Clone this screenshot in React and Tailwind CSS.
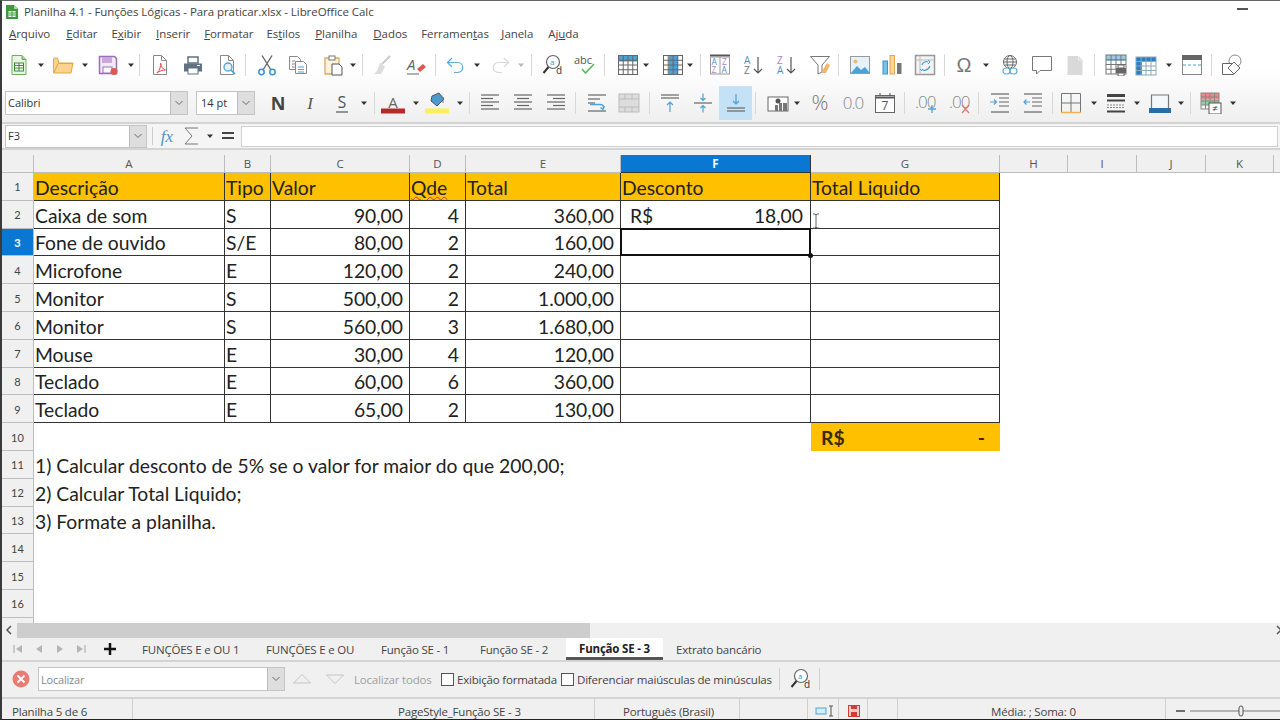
import React from "react";

const Ico = ({ c = "", children, w = 22 }) => (
  <svg viewBox={`0 0 ${w} 22`} width={w} height={22} fill="none" className={"shrink-0 " + c}>{children}</svg>
);
const Arrow = ({ c = "", light }) => (
  <svg viewBox="0 0 8 22" width={8} height={22} className={"shrink-0 " + c}>
    <path d="M1 9.5h6L4 13z" fill={light ? "#b8b8b8" : "#333"} />
  </svg>
);
const Sep = ({ c = "" }) => <div className={"w-px h-[22px] shrink-0 bg-[#d8d8d8] " + c} />;
const Grid = ({ x = 2, y = 3, w = 18, h = 16, s = "#777", cols = 4, rows = 4 }) => {
  const out = [];
  for (let i = 1; i < cols; i++) out.push(<path key={"c" + i} d={`M${x + (w * i) / cols} ${y}v${h}`} stroke={s} />);
  for (let i = 1; i < rows; i++) out.push(<path key={"r" + i} d={`M${x} ${y + (h * i) / rows}h${w}`} stroke={s} />);
  return <g>{out}<rect x={x} y={y} width={w} height={h} stroke={s} /></g>;
};

const T = { fontFamily: "'Open Sans',sans-serif" };

const New = (p) => <Ico {...p}><path d="M4 1.5h10l4 4v15H4z" fill="#eaf5e6" stroke="#6fae5c" /><path d="M14 1.5v4h4" stroke="#6fae5c" fill="#9fd08f" /><rect x="6.5" y="9" width="9" height="8" fill="#fff" stroke="#3f8a3a" /><path d="M6.5 11.5h9M6.5 14h9M11 9v8" stroke="#3f8a3a" /></Ico>;
const Open = (p) => <Ico {...p}><path d="M1.5 6V19h17.5l2-10H7L5.5 4H2z" fill="#fbd38d" stroke="#e5a64a" /><path d="M2 18.5 6 9.5h15" stroke="#e5a64a" fill="none" /></Ico>;
const Save = (p) => <Ico {...p}><path d="M2.5 2.5h15l2 2v15h-17z" fill="#f3e9f7" stroke="#9b6fb5" strokeWidth="1.5" /><rect x="5" y="3" width="10" height="6" fill="#c9a8dc" /><rect x="6" y="13" width="9" height="6" fill="#fff" stroke="#9b6fb5" /><circle cx="17" cy="17.5" r="3.5" fill="#e2574c" /></Ico>;
const Pdf = (p) => <Ico {...p}><path d="M4.5 1.5h8l5 5v14h-13z" fill="#fff" stroke="#888" /><path d="M12.5 1.5v5h5" stroke="#888" /><path d="M8 19c3-3 4-7 3.5-10 1 4 2 6 5 7-3 0-6 1-8.5 3z" stroke="#d9534f" fill="none" /></Ico>;
const Print = (p) => <Ico {...p}><rect x="6" y="3" width="10" height="6" fill="#fff" stroke="#5f7182" strokeWidth="1.5" /><path d="M2 9.5h18v8H2z" fill="#5f7182" /><rect x="6" y="14" width="10" height="6" fill="#fff" stroke="#5f7182" /><path d="M15 11.5h3" stroke="#fff" /></Ico>;
const Preview = (p) => <Ico {...p}><path d="M4.5 1.5h8l5 5v14h-13z" fill="#fff" stroke="#8a8a8a" /><path d="M12.5 1.5v5h5" stroke="#8a8a8a" /><circle cx="12" cy="13" r="4" stroke="#4aa3d8" fill="#e3f2fb" strokeWidth="1.3" /><path d="m15 16 4 4" stroke="#4aa3d8" strokeWidth="1.7" /></Ico>;
const Cut = (p) => <Ico {...p}><path d="M6 1.5 15 16M16 1.5 7 16" stroke="#666" strokeWidth="1.4" /><circle cx="5.5" cy="18" r="2.7" stroke="#3d93cf" strokeWidth="1.5" /><circle cx="16.5" cy="18" r="2.7" stroke="#3d93cf" strokeWidth="1.5" /></Ico>;
const Copy = (p) => <Ico {...p}><path d="M2.5 2.5h8l3 3v10h-11z" fill="#fff" stroke="#8a8a8a" /><path d="M8.5 7.5h8l3 3v9h-11z" fill="#fff" stroke="#8a8a8a" /><path d="M5 7h3M5 10h3M5 13h3" stroke="#8a8a8a" /><path d="M11 13h6M11 15.5h6M11 18h6" stroke="#4aa3d8" /></Ico>;
const Paste = (p) => <Ico {...p}><path d="M3 4h14v16H3z" fill="#fdf3dc" stroke="#d9ad62" strokeWidth="1.3" /><rect x="7" y="2" width="6" height="4" fill="#fff" stroke="#777" /><path d="M10 10h7l3 3v8H10z" fill="#fff" stroke="#555" /></Ico>;
const Clone = (p) => <Ico {...p}><path d="M19 2 11 10" stroke="#c9c9c9" strokeWidth="2" /><path d="M9 8.5 14 13l-4 7H3c3-2 4-5 6-11.5z" fill="#dcdcdc" /></Ico>;
const Clear = (p) => <Ico {...p}><text x="2" y="16" fontSize="15" fontStyle="italic" fill="#666" style={T}>A</text><path d="M2 20h12" stroke="#666" /><path d="m12 15 6-5 3 3-6 5z" fill="#e2574c" /></Ico>;
const Undo = (p) => <Ico {...p}><path d="M7 4 2.5 8.5 7 13M3 8.5h9.5c7 0 7 10 0 10H9" stroke="#5fa8d8" strokeWidth="1.2" /></Ico>;
const Redo = (p) => <Ico {...p}><path d="M15 4l4.5 4.5L15 13M19 8.500H9.5c-7 0-7 10 0 10H13" stroke="#d8d8d8" strokeWidth="1.2" /></Ico>;
const Find = (p) => <Ico {...p}><circle cx="11" cy="8" r="6.5" stroke="#666" fill="#fff" strokeWidth="1.2" /><path d="M6.5 13 1.5 19" stroke="#333" strokeWidth="2" /><text x="8" y="10.5" fontSize="8" fill="#3d93cf" style={T}>a</text><text x="14" y="20" fontSize="10" fill="#333" style={T}>d</text></Ico>;
const Spell = (p) => <Ico {...p}><text x="0" y="10" fontSize="11" fill="#555" style={T}>abc</text><path d="m8 15 3.5 4L20 10" stroke="#5fb760" strokeWidth="1.7" /></Ico>;
const TableI = (p) => <Ico {...p}><rect x="1.5" y="1.5" width="19" height="6" fill="#4aa3d8" /><Grid x={1.5} y={1.5} w={19} h={19} s="#666" /></Ico>;
const ColI = (p) => <Ico {...p}><rect x="7" y="1.5" width="9" height="19" fill="#4aa3d8" /><Grid x={1.5} y={1.5} w={19} h={19} s="#666" /></Ico>;
const AutoF = (p) => <Ico {...p}><path d="M1 1.5h20" stroke="#555" strokeWidth="2" /><rect x="1.5" y="3" width="19" height="17" fill="#fff" stroke="#999" /><path d="M11 3v17" stroke="#999" /><text x="2.5" y="11" fontSize="8.500" fill="#3d93cf" style={T}>A</text><text x="2.5" y="19" fontSize="8.500" fill="#b57ecb" style={T}>Z</text><text x="13" y="11" fontSize="8.500" fill="#b57ecb" style={T}>Z</text><text x="12.5" y="19" fontSize="8.500" fill="#3d93cf" style={T}>A</text></Ico>;
const Sort = ({ az, ...p }) => <Ico {...p}><text x="1" y="9.500" fontSize="10" fill={az ? "#3d93cf" : "#b57ecb"} style={T}>{az ? "A" : "Z"}</text><text x="1" y="20" fontSize="10" fill={az ? "#777" : "#3d93cf"} style={T}>{az ? "Z" : "A"}</text><path d="M15 3v16M11 15l4 4 4-4" stroke="#555" strokeWidth="1.2" /></Ico>;
const Filter = (p) => <Ico {...p}><path d="M1.5 2.5h19L13 11v7l-4 2V11z" fill="#fff" stroke="#777" /><path d="m12 19 6-10 3 2-4 8z" fill="#f2b56b" /></Ico>;
const Image = (p) => <Ico {...p}><rect x="1.5" y="2.5" width="19" height="17" fill="#e5f2fa" stroke="#999" /><circle cx="6.5" cy="7.5" r="2" fill="#f0b860" /><path d="M2 19 8 12l4 4 4-3 4 5v1H2z" fill="#4aa3d8" /></Ico>;
const Chart = (p) => <Ico {...p}><rect x="2" y="7" width="4.5" height="13" fill="#7cc0e6" stroke="#3d93cf" /><rect x="9" y="1.5" width="4.5" height="18.5" fill="#f8d79a" stroke="#e5a64a" /><rect x="16" y="9" width="4.5" height="11" fill="#777" /></Ico>;
const Pivot = (p) => <Ico {...p}><rect x="1.5" y="1.5" width="19" height="19" fill="#f4f4f4" stroke="#999" strokeWidth="1.5" /><path d="M1.5 6h19M6 1.5v19" stroke="#bbb" /><path d="M8 15c1 2 6 2 8-3M14 8c-2-1-5 0-6 3" stroke="#4aa3d8" strokeWidth="1.3" /><path d="m14 6 2 2-2 2M8 17l-2-2" stroke="#4aa3d8" /></Ico>;
const Omega = (p) => <Ico {...p}><text x="11" y="18" textAnchor="middle" fontSize="20" fill="#777" style={{ fontFamily: "'Liberation Sans',sans-serif" }}>Ω</text></Ico>;
const Link = (p) => <Ico {...p}><circle cx="11" cy="8" r="6.5" stroke="#666" fill="#fff" /><ellipse cx="11" cy="8" rx="3" ry="6.5" stroke="#666" /><path d="M4.5 8h13M5.5 5h11M5.5 11h11" stroke="#666" /><rect x="4" y="14" width="7" height="6" rx="3" fill="#fff" stroke="#5fa8d8" strokeWidth="1.2" /><rect x="11" y="14" width="7" height="6" rx="3" fill="#fff" stroke="#5fa8d8" strokeWidth="1.2" /></Ico>;
const Comment = (p) => <Ico {...p}><path d="M1.5 2.5h19v14H9L5.5 20v-3.5h-4z" fill="#fff" stroke="#777" /></Ico>;
const Note = (p) => <Ico {...p}><path d="M3.5 2h11l4 4v15h-15z" fill="#d9d9d9" /><path d="M14.5 2v4h4" stroke="#f0f0f0" /></Ico>;
const Headers = (p) => <Ico {...p}><rect x="1" y="1" width="20" height="6" fill="#9cc8e2" /><Grid x={1} y={1} w={20} h={19} s="#777" /><rect x="11" y="14" width="10" height="5" fill="#666" /><rect x="13" y="11" width="6" height="3" fill="#fff" stroke="#666" /><rect x="13" y="19" width="6" height="3" fill="#fff" stroke="#666" /></Ico>;
const Names = (p) => <Ico {...p}><rect x="1" y="4" width="20" height="17" fill="#fff" /><rect x="1" y="3" width="20" height="5" fill="#2b7cc0" /><rect x="1" y="3" width="6" height="18" fill="#2b7cc0" /><Grid x={1} y={3} w={20} h={18} s="#8ab" /></Ico>;
const Freeze = (p) => <Ico {...p}><rect x="1.5" y="1.5" width="19" height="19" fill="#fff" stroke="#888" /><rect x="1" y="1" width="20" height="5" fill="#666" /><path d="M2 11h18" stroke="#4aa3d8" strokeDasharray="3 2" /></Ico>;
const Shapes = (p) => <Ico {...p}><circle cx="14" cy="7" r="6" fill="#fff" stroke="#888" /><path d="M1.5 9.5h11v11h-11z" fill="#fff" stroke="#666" /><path d="m13 8 6 6-6 6-6-6z" fill="#fff" stroke="#666" /></Ico>;

const Bar = ({ l = 2, r = 20, y, c = "#666" }) => <path d={`M${l} ${y}H${r}`} stroke={c} strokeWidth="1.2" />;
const AlignL = (p) => <Ico {...p}>{[3, 6.5, 10, 13.5, 17].map((y, i) => <Bar key={y} y={y} r={i % 2 ? 14 : 20} />)}</Ico>;
const AlignC = (p) => <Ico {...p}>{[3, 6.5, 10, 13.5, 17].map((y, i) => <Bar key={y} y={y} l={i % 2 ? 5 : 2} r={i % 2 ? 17 : 20} />)}</Ico>;
const AlignR = (p) => <Ico {...p}>{[3, 6.5, 10, 13.5, 17].map((y, i) => <Bar key={y} y={y} l={i % 2 ? 8 : 2} />)}</Ico>;
const Wrap = (p) => <Ico {...p}><Bar y={3} /><Bar y={7} r={14} /><Bar y={11} r={9} /><Bar y={19} /><path d="M4 12.5h10c4 0 4 3 3 4m-2.5-1 2.5 2 1.5-3.5" stroke="#4aa3d8" strokeWidth="1.3" /></Ico>;
const Merge = (p) => <Ico {...p}><rect x="1" y="2" width="20" height="18" fill="#ddd" stroke="#bbb" /><path d="M1 7h20M1 15h20M7 2v5M14 2v5M7 15v5M14 15v5" stroke="#bbb" /></Ico>;
const VTop = (p) => <Ico {...p}><Bar y={3} /><Bar y={6} /><path d="M11 20V10M8 13l3-3 3 3" stroke="#4aa3d8" strokeWidth="1.2" /></Ico>;
const VMid = (p) => <Ico {...p}><Bar y={11} /><path d="M11 1.5v7M8.5 6l2.5 2.5L13.5 6M11 20.5v-7M8.5 16l2.5-2.5 2.5 2.5" stroke="#4aa3d8" strokeWidth="1.2" /></Ico>;
const VBot = (p) => <Ico {...p}><path d="M11 2v10M8 9l3 3 3-3" stroke="#4aa3d8" strokeWidth="1.2" /><Bar y={16} /><Bar y={19} /></Ico>;
const Currency = (p) => <Ico {...p}><rect x="1" y="5" width="20" height="14" fill="#fff" stroke="#666" /><circle cx="11" cy="9" r="2.5" fill="#555" /><rect x="8" y="13" width="3" height="6" fill="#777" /><rect x="12" y="11" width="3" height="8" fill="#777" /><rect x="16" y="11" width="4" height="8" fill="#777" /></Ico>;
const Pct = (p) => <Ico {...p}><text x="11" y="18" textAnchor="middle" fontSize="21" fill="#777" style={{ ...T, fontWeight: 300 }}>%</text></Ico>;
const Dec = (p) => <Ico {...p}><text x="11" y="17" textAnchor="middle" fontSize="17" letterSpacing="-1" fill="#888" style={{ ...T, fontWeight: 300 }}>0.0</text></Ico>;
const Cal = (p) => <Ico {...p}><rect x="1.5" y="3.5" width="19" height="17" fill="#fff" stroke="#666" /><path d="M1.5 5.5h19" stroke="#555" strokeWidth="2" /><path d="M6 1v3M16 1v3" stroke="#555" /><text x="11" y="18" textAnchor="middle" fontSize="12" fill="#555" style={T}>7</text></Ico>;
const AddDec = (p) => <Ico {...p}><text x="0" y="16" fontSize="17" letterSpacing="-1" fill="#888" style={{ ...T, fontWeight: 300 }}>.00</text><path d="M17 13v8M13 17h8" stroke="#4aa3d8" strokeWidth="1.3" /></Ico>;
const DelDec = (p) => <Ico {...p}><text x="0" y="16" fontSize="17" letterSpacing="-1" fill="#888" style={{ ...T, fontWeight: 300 }}>.00</text><path d="m13 13 7 8M20 13l-7 8" stroke="#e2776c" strokeWidth="1.3" /></Ico>;
const Indent = (p) => <Ico {...p}><Bar y={2} /><Bar y={20} /><path d="M10 6h10M10 10h10M10 14h10" stroke="#666" /><path d="M1 10h6M5 7.5 7.5 10 5 12.5" stroke="#4aa3d8" strokeWidth="1.2" /></Ico>;
const Outdent = (p) => <Ico {...p}><Bar y={2} /><Bar y={20} /><path d="M10 6h10M10 10h10M10 14h10" stroke="#666" /><path d="M8 10H2M4.5 7.5 2 10l2.5 2.5" stroke="#4aa3d8" strokeWidth="1.2" /></Ico>;
const Borders = (p) => <Ico {...p}><path d="M1.5 20.5v-19h19v19M11 1.5v19M1.5 11h19" stroke="#777" /><path d="M1 20.5h20" stroke="#f2b14c" strokeWidth="1.5" /></Ico>;
const Lines = (p) => <Ico {...p}><path d="M2 3.5h18" stroke="#444" strokeWidth="3" /><path d="M2 8.5h18" stroke="#444" strokeWidth="2" /><path d="M2 13h18M2 15.5h18" stroke="#888" strokeDasharray="2 1" /><path d="M2 19.5h18" stroke="#444" strokeWidth="2" /></Ico>;
const BColor = (p) => <Ico {...p} w={24}><path d="M3.5 16V3h17v13" fill="#f4f8fb" stroke="#777" strokeWidth="1.2" /><path d="M1 16h22v5H1z" fill="#2a6ca6" /></Ico>;
const Cond = (p) => <Ico {...p}><rect x="1" y="1" width="18" height="6" fill="#e88" /><rect x="1" y="7" width="18" height="6" fill="#9c9" /><Grid x={1} y={1} w={18} h={16} s="#888" /><rect x="9" y="11" width="12" height="11" fill="#fff" stroke="#555" /><text x="15" y="20" textAnchor="middle" fontSize="10" fill="#333" style={T}>≠</text></Ico>;

const Chevron = ({ c = "" }) => (
  <div className={"flex items-center justify-center bg-[#dedede] border-l border-[#bdbdbd] shrink-0 " + c}>
    <svg width="10" height="8" viewBox="0 0 10 8"><path d="m1.5 2 3.5 3.5L8.5 2" stroke="#666" fill="none" /></svg>
  </div>
);

const COLS = [
  ["A", false], ["B", false], ["C", false], ["D", false], ["E", false], ["F", true], ["G", false],
  ["H", false], ["I", false], ["J", false], ["K", false],
];

const ROWS = [
  ["Caixa de som", "S", "90,00", "4", "360,00"],
  ["Fone de ouvido", "S/E", "80,00", "2", "160,00"],
  ["Microfone", "E", "120,00", "2", "240,00"],
  ["Monitor", "S", "500,00", "2", "1.000,00"],
  ["Monitor", "S", "560,00", "3", "1.680,00"],
  ["Mouse", "E", "30,00", "4", "120,00"],
  ["Teclado", "E", "60,00", "6", "360,00"],
  ["Teclado", "E", "65,00", "2", "130,00"],
];

const Cell = ({ c = "", children }) => (
  <div className={"border-r border-b border-[#333] px-[1px] pt-[2px] flex items-center whitespace-nowrap text-[#222] " + c}>{children}</div>
);
const RowH = ({ n, active }) => (
  <div className={"flex items-center justify-center border-r border-b border-[#bdbdbd] text-[11px] pt-[1px] " + (active ? "bg-[#0a78d2] text-white font-bold" : "bg-[#f0f0f0] text-[#444]")}>{n}</div>
);
const Free = ({ c = "", children }) => <div className={"flex items-center pt-[2px] whitespace-nowrap overflow-visible text-[#222] px-[1px] " + c}>{children}</div>;
const Empty = ({ span }) => <div className={span} />;

const NavTri = ({ d, bar }) => (
  <svg width="10" height="12" viewBox="0 0 10 12" className="shrink-0">
    <path d={d} fill="#b5b5b5" />
    {bar && <path d={bar} stroke="#b5b5b5" strokeWidth="1.3" />}
  </svg>
);

const Tab = ({ c = "", children }) => <span className={"whitespace-nowrap shrink-0 " + c}>{children}</span>;

export default function App() {
  const ui = { fontFamily: "'Open Sans','Noto Sans',sans-serif" };
  const sheet = { fontFamily: "Lato,'Open Sans',sans-serif" };
  return (
    <div className="w-[1280px] h-[720px] overflow-hidden bg-white border-l-2 border-t border-b border-l-[#3a3a3a] border-t-[#666] border-b-[#222] flex flex-col text-[#333]" style={ui}>
      {/* title */}
      <div className="h-[21px] shrink-0 flex items-center bg-white">
        <svg width="14" height="16" viewBox="0 0 14 16" className="ml-[3px] shrink-0"><path d="M1 1h8l4 4v10H1z" fill="#3f9a3f" /><path d="M9 1v4h4" fill="#a8d8a0" /><rect x="3.5" y="7" width="7" height="6" fill="#fff" /><path d="M3.5 9h7M3.5 11h7M7 7v6" stroke="#3f9a3f" /></svg>
        <span className="ml-[5px] text-[11.5px] whitespace-nowrap tracking-[-0.06px] text-[#444]">Planilha 4.1 - Funções Lógicas - Para praticar.xlsx - LibreOffice Calc</span>
        <div className="ml-auto mr-[32px] w-[11px] h-[1.5px] bg-[#555] -mt-[5px]" />
      </div>
      {/* menu */}
      <div className="h-[24px] shrink-0 flex items-center text-[11.5px] tracking-[-0.06px] text-[#444] bg-white whitespace-nowrap">
        <span className="ml-[7px]"><u>A</u>rquivo</span>
        <span className="ml-[16px]"><u>E</u>ditar</span>
        <span className="ml-[14px]">E<u>x</u>ibir</span>
        <span className="ml-[15px]"><u>I</u>nserir</span>
        <span className="ml-[14px]"><u>F</u>ormatar</span>
        <span className="ml-[13px]">Es<u>t</u>ilos</span>
        <span className="ml-[15px]"><u>P</u>lanilha</span>
        <span className="ml-[16px]"><u>D</u>ados</span>
        <span className="ml-[14px]">Ferramen<u>t</u>as</span>
        <span className="ml-[12.5px]"><u>J</u>anela</span>
        <span className="ml-[15px]">Aj<u>u</u>da</span>
      </div>
      {/* toolbars */}
      <div className="shrink-0 bg-gradient-to-b from-white from-30% to-[#efefef]">
        <div className="h-[38px] flex items-center">
          <New c="ml-[6px]" /><Arrow c="ml-[7px]" /><Open c="ml-[7px]" /><Arrow c="ml-[7px]" /><Save c="ml-[8px]" /><Arrow c="ml-[8px]" /><Sep c="ml-[4px]" />
          <Pdf c="ml-[9px]" /><Print c="ml-[11px]" /><Preview c="ml-[12px]" /><Sep c="ml-[7px]" />
          <Cut c="ml-[10px]" /><Copy c="ml-[9px]" /><Paste c="ml-[13px]" /><Arrow c="ml-[5px]" /><Sep c="ml-[5px]" />
          <Clone c="ml-[8px]" /><Clear c="ml-[12px]" /><Sep c="ml-[8px]" />
          <Undo c="ml-[9px]" /><Arrow c="ml-[6px]" /><Redo c="ml-[8px]" /><Arrow light c="ml-[6px]" /><Sep c="ml-[6px]" />
          <Find c="ml-[10px]" /><Spell c="ml-[10px]" /><Sep c="ml-[8px]" />
          <TableI c="ml-[12px]" /><Arrow c="ml-[3px]" /><ColI c="ml-[12px]" /><Arrow c="ml-[2px]" /><Sep c="ml-[6px]" />
          <AutoF c="ml-[8px]" /><Sort az c="ml-[12px]" /><Sort c="ml-[11px]" /><Filter c="ml-[11px]" /><Sep c="ml-[7px]" />
          <Image c="ml-[10px]" /><Chart c="ml-[10px]" /><Pivot c="ml-[11px]" /><Sep c="ml-[8px]" />
          <Omega c="ml-[8px]" /><Arrow c="ml-[7px]" /><Link c="ml-[9px]" /><Comment c="ml-[10px]" /><Note c="ml-[11px]" /><Sep c="ml-[8px]" />
          <Headers c="ml-[10px]" /><Names c="ml-[8px]" /><Arrow c="ml-[8px]" /><Freeze c="ml-[8px]" /><Sep c="ml-[8px]" /><Shapes c="ml-[9px]" />
        </div>
        <div className="h-[38px] flex items-center">
          <div className="ml-[3px] w-[183px] h-[24px] flex border border-[#c4c4c4] bg-white text-[11px] shrink-0">
            <span className="flex-1 pl-[2px] self-center">Calibri</span><Chevron c="w-[17px]" />
          </div>
          <div className="ml-[8px] w-[59px] h-[24px] flex border border-[#c4c4c4] bg-white text-[11px] shrink-0">
            <span className="flex-1 pl-[4px] self-center whitespace-nowrap">14 pt</span><Chevron c="w-[17px]" />
          </div>
          <Ico c="ml-[12px]"><text x="11" y="18" textAnchor="middle" fontSize="18" fontWeight="700" fill="#444" style={T}>N</text></Ico>
          <Ico c="ml-[10px]"><text x="11" y="17" textAnchor="middle" fontSize="17" fontStyle="italic" fill="#555" style={{ fontFamily: "'Liberation Serif',serif" }}>I</text></Ico>
          <Ico c="ml-[10px]"><text x="11" y="16" textAnchor="middle" fontSize="16" fill="#555" style={T}>S</text><path d="M5 20h12" stroke="#555" strokeWidth="1.2" /></Ico>
          <Arrow c="ml-[7px]" /><Sep c="ml-[6px]" />
          <Ico w={24} c="ml-[6px]"><text x="12" y="15.5" textAnchor="middle" fontSize="15" fill="#666" style={T}>A</text><rect x="0" y="16.5" width="24" height="5" fill="#b32a2a" /></Ico>
          <Arrow c="ml-[7px]" />
          <Ico w={24} c="ml-[5px]"><path d="m7 4 7-3 5 6-7 7-6-5z" fill="#4a9ad0" stroke="#555" /><path d="M18 5v6" stroke="#777" /><rect x="0" y="16.5" width="24" height="5" fill="#fbef5a" /></Ico>
          <Arrow c="ml-[7px]" /><Sep c="ml-[5px]" />
          <AlignL c="ml-[9px]" /><AlignC c="ml-[11px]" /><AlignR c="ml-[11px]" /><Sep c="ml-[8px]" />
          <Wrap c="ml-[10px]" /><Merge c="ml-[10px]" /><Sep c="ml-[9px]" />
          <VTop c="ml-[9px]" /><VMid c="ml-[11px]" />
          <div className="ml-[5px] w-[33px] h-[34px] bg-[#c5e1f5] flex items-center justify-center shrink-0"><VBot /></div>
          <Sep c="ml-[3px]" />
          <Currency c="ml-[11px]" /><Arrow c="ml-[4px]" /><Pct c="ml-[8px]" /><Dec c="ml-[11px]" /><Cal c="ml-[10px]" /><Sep c="ml-[8px]" />
          <AddDec c="ml-[10px]" /><DelDec c="ml-[12px]" /><Sep c="ml-[7px]" />
          <Indent c="ml-[10px]" /><Outdent c="ml-[11px]" /><Sep c="ml-[8px]" />
          <Borders c="ml-[7px]" /><Arrow c="ml-[8px]" /><Lines c="ml-[7px]" /><Arrow c="ml-[6px]" /><BColor c="ml-[7px]" /><Arrow c="ml-[5px]" /><Sep c="ml-[5px]" />
          <Cond c="ml-[9px]" /><Arrow c="ml-[7px]" />
        </div>
      </div>
      {/* formula bar */}
      <div className="h-[28px] shrink-0 flex items-center bg-[#f5f5f5] border-t-2 border-b-2 border-[#d4d4d4]">
        <div className="ml-[3px] w-[142px] h-[23px] flex border border-[#c4c4c4] bg-white text-[11px] shrink-0">
          <span className="flex-1 pl-[2px] pt-[1px] self-center">F3</span><Chevron c="w-[17px]" />
        </div>
        <div className="ml-[5px] w-px h-[18px] bg-[#ccc] shrink-0" />
        <Ico c="ml-[3px]"><text x="11" y="17" textAnchor="middle" fontSize="17" fontStyle="italic" fill="#4a96c8" style={{ fontFamily: "'Liberation Serif',serif" }}>fx</text></Ico>
        <Ico c="ml-[2px]" w={20}><path d="M18 3H5l7 8-7 8h13" stroke="#777" /></Ico>
        <Arrow c="ml-[6px]" />
        <Ico c="ml-[7px]" w={14}><path d="M1 8h12M1 13h12" stroke="#444" strokeWidth="1.8" /></Ico>
        <div className="ml-[6px] flex-1 mr-[2px] h-[21px] bg-white border border-[#d0d0d0]" />
      </div>
      {/* sheet */}
      <div className="h-[5px] shrink-0 bg-[#f0f0f0]" />
      <div className="shrink-0 grid grid-cols-[32px_191px_46px_139px_56px_155px_190px_189px_68px_69px_69px_68px_1fr] grid-rows-[18px_repeat(16,27.8px)] text-[19.3px] leading-none bg-white" style={sheet}>
        <div className="bg-[#f0f0f0] border-r border-b border-[#bdbdbd]" />
        {COLS.map(([l, act]) => (
          <div key={l} className={"flex items-center justify-center border-r border-b text-[11.5px] " + (act ? "bg-[#0a78d2] text-white font-bold border-[#333]" : "bg-[#f0f0f0] text-[#555] border-[#bdbdbd]")} style={ui}>{l}</div>
        ))}
        <div className="bg-[#f0f0f0] border-b border-[#bdbdbd]" />

        <RowH n="1" />
        {["Descrição", "Tipo", "Valor", "Qde", "Total", "Desconto", "Total Liquido"].map((t) => (
          <Cell key={t} c="bg-[#ffc000] text-[#3a2a00]">
            {t === "Qde" ? <span className="underline decoration-wavy decoration-[#d33] decoration-1">{t}</span> : t}
          </Cell>
        ))}
        <Empty span="col-span-5" />

        {ROWS.map((r, i) => (
          <React.Fragment key={i}>
            <RowH n={String(i + 2)} active={i === 1} />
            <Cell>{r[0]}</Cell>
            <Cell>{r[1]}</Cell>
            <Cell c="justify-end pr-[6px]">{r[2]}</Cell>
            <Cell c="justify-end pr-[6px]">{r[3]}</Cell>
            <Cell c="justify-end pr-[6px]">{r[4]}</Cell>
            {i === 0 ? (
              <Cell c="justify-between pl-[9px] pr-[7px]"><span>R$</span><span>18,00</span></Cell>
            ) : i === 1 ? (
              <Cell c="relative">
                <div className="absolute -left-px -top-px -right-px -bottom-px border-2 border-[#111]" />
                <div className="absolute -right-[3px] -bottom-[3px] w-[5px] h-[5px] bg-[#111] rounded-full" />
              </Cell>
            ) : (
              <Cell />
            )}
            {i === 0 ? (
              <Cell c="relative">
                <svg width="8" height="16" viewBox="0 0 8 16" className="absolute left-[1px] top-[12px]"><path d="M1 1h2l1 1 1-1h2M4 2v12M1 15h2l1-1 1 1h2" stroke="#666" fill="none" /></svg>
              </Cell>
            ) : (
              <Cell />
            )}
            <Empty span="col-span-5" />
          </React.Fragment>
        ))}

        <RowH n="10" />
        <Empty span="col-span-6" />
        <div className="bg-[#ffc000] flex items-center justify-between pl-[10px] pr-[15px] pt-[2px] font-bold text-[#3a2a00]"><span>R$</span><span>-</span></div>
        <Empty span="col-span-5" />

        {["1) Calcular desconto de 5% se o valor for maior do que 200,00;", "2) Calcular Total Liquido;", "3) Formate a planilha."].map((t, i) => (
          <React.Fragment key={t}>
            <RowH n={String(i + 11)} />
            <Free c="col-span-12">{t}</Free>
          </React.Fragment>
        ))}
        {["14", "15", "16"].map((n) => (
          <React.Fragment key={n}>
            <RowH n={n} />
            <Empty span="col-span-12" />
          </React.Fragment>
        ))}
      </div>
      <div className="h-[5px] shrink-0 flex"><div className="w-[32px] border-r border-[#bdbdbd] bg-[#f0f0f0]" /></div>
      {/* h scroll */}
      <div className="h-[15px] shrink-0 flex items-center bg-[#f0f0f0]">
        <svg width="8" height="10" viewBox="0 0 8 10" className="ml-[3px] shrink-0"><path d="M6 1 2 5l4 4" stroke="#555" strokeWidth="1.5" fill="none" /></svg>
        <div className="ml-[4px] w-[573px] h-full bg-[#cdcdcd]" />
        <svg width="8" height="10" viewBox="0 0 8 10" className="ml-auto mr-[-3px] shrink-0"><path d="m2 1 4 4-4 4" stroke="#555" strokeWidth="1.5" fill="none" /></svg>
      </div>
      {/* tabs */}
      <div className="h-[24px] shrink-0 flex items-center bg-[#f0f0f0] border-b-2 border-[#d4d4d4] text-[11.5px] tracking-[-0.2px] text-[#444]">
        <div className="ml-[11px]"><NavTri d="M9 2v8L3 6z" bar="M1 2v8" /></div>
        <div className="ml-[11px]"><NavTri d="M8 2v8L2 6z" /></div>
        <div className="ml-[11px]"><NavTri d="M2 2v8l6-4z" /></div>
        <div className="ml-[11px]"><NavTri d="M1 2v8l6-4z" bar="M9 2v8" /></div>
        <svg width="14" height="14" viewBox="0 0 14 14" className="ml-[17px] shrink-0"><path d="M7 1v12M1 7h12" stroke="#111" strokeWidth="2.5" /></svg>
        <Tab c="ml-[25px] w-[97px] pt-[2px]">FUNÇÕES E e OU 1</Tab>
        <Tab c="ml-[27px] w-[88px] pt-[2px]">FUNÇÕES E e OU</Tab>
        <Tab c="ml-[27px] w-[70px] pt-[2px]">Função SE - 1</Tab>
        <Tab c="ml-[29px] w-[71px] pt-[2px]">Função SE - 2</Tab>
        <div className="ml-[15px] w-[97px] h-full shrink-0 bg-white border-b-[3px] border-[#555] flex items-center justify-center font-bold text-[#222] whitespace-nowrap pt-[2px]">Função SE - 3</div>
        <Tab c="ml-[13px] pt-[2px]">Extrato bancário</Tab>
      </div>
      {/* find */}
      <div className="h-[37px] shrink-0 flex items-center bg-[#f0f0f0] border-b-2 border-[#d4d4d4] text-[11.5px] tracking-[-0.2px] text-[#444] whitespace-nowrap">
        <svg width="18" height="18" viewBox="0 0 18 18" className="ml-[10px] shrink-0"><circle cx="9" cy="9" r="8.5" fill="#ea7b74" /><path d="m5.5 5.5 7 7M12.5 5.5l-7 7" stroke="#fff" strokeWidth="1.8" /></svg>
        <div className="ml-[8px] w-[247px] h-[24px] flex border border-[#c4c4c4] bg-white text-[11px] shrink-0">
          <span className="flex-1 pl-[2px] pt-[1px] self-center text-[#888]">Localizar</span><Chevron c="w-[17px]" />
        </div>
        <svg width="20" height="12" viewBox="0 0 20 12" className="ml-[7px] shrink-0"><path d="M10 1.5 18.5 10h-17z" fill="none" stroke="#c4c4c4" /></svg>
        <svg width="20" height="12" viewBox="0 0 20 12" className="ml-[13px] shrink-0"><path d="M10 10.5 18.5 2h-17z" fill="none" stroke="#c4c4c4" /></svg>
        <span className="ml-[9px] w-[79px] shrink-0 pt-[1px] text-[#a0a0a0]">Localizar todos</span>
        <div className="ml-[8px] w-[13px] h-[13px] border border-[#555] bg-white shrink-0" />
        <span className="ml-[3px] w-[101px] shrink-0 pt-[1px]">Exibição formatada</span>
        <div className="ml-[3px] w-[13px] h-[13px] border border-[#555] bg-white shrink-0" />
        <span className="ml-[3px] w-[195px] shrink-0 pt-[1px]">Diferenciar maiúsculas de minúsculas</span>
        <div className="ml-[7px] w-px h-[22px] bg-[#d0d0d0] shrink-0" />
        <Find c="ml-[10px]" />
        <div className="ml-[7px] w-px h-[22px] bg-[#d0d0d0] shrink-0" />
      </div>
      {/* status */}
      <div className="flex-1 min-h-0 flex items-stretch bg-[#f0f0f0] text-[11.5px] tracking-[-0.2px] text-[#444] whitespace-nowrap overflow-hidden">
        <span className="ml-[10px] w-[120px] shrink-0 pt-[4px]">Planilha 5 de 6</span>
        <div className="w-px shrink-0 bg-[#d0d0d0]" />
        <span className="ml-[265px] w-[125px] shrink-0 pt-[4px]">PageStyle_Função SE - 3</span>
        <div className="ml-[71px] w-px shrink-0 bg-[#d0d0d0]" />
        <span className="ml-[28px] w-[92px] shrink-0 pt-[4px]">Português (Brasil)</span>
        <div className="ml-[24px] w-px shrink-0 bg-[#d0d0d0]" />
        <div className="ml-[67px] w-px shrink-0 bg-[#d0d0d0]" />
        <svg width="20" height="12" viewBox="0 0 20 12" className="ml-[7px] mt-[6px] shrink-0"><rect x="1" y="3" width="10" height="6" fill="#d6ecf9" stroke="#4aa3d8" /><path d="M14 1h4M16 1v10M14 11h4" stroke="#555" /></svg>
        <div className="ml-[3px] w-px shrink-0 bg-[#d0d0d0]" />
        <svg width="12" height="12" viewBox="0 0 12 12" className="ml-[9px] mt-[6px] shrink-0"><rect x=".5" y=".5" width="11" height="11" fill="#f6c9c6" stroke="#c9403a" /><rect x="3" y="1" width="6" height="3" fill="#c9403a" /><rect x="3" y="7" width="6" height="4" fill="#c9403a" /></svg>
        <div className="ml-[7px] w-px shrink-0 bg-[#d0d0d0]" />
        <div className="ml-[29px] w-px shrink-0 bg-[#d0d0d0]" />
        <span className="ml-[93px] w-[86px] shrink-0 pt-[4px]">Média: ; Soma: 0</span>
        <div className="ml-[88px] w-px shrink-0 bg-[#d0d0d0]" />
        <svg width="114" height="12" viewBox="0 0 114 12" className="ml-[9px] mt-[6px] shrink-0"><path d="M1 6h9" stroke="#444" strokeWidth="1.5" /><path d="M15 6h99" stroke="#777" /><rect x="64" y="1" width="4" height="10" rx="2" fill="#eee" stroke="#555" /></svg>
      </div>
    </div>
  );
}
